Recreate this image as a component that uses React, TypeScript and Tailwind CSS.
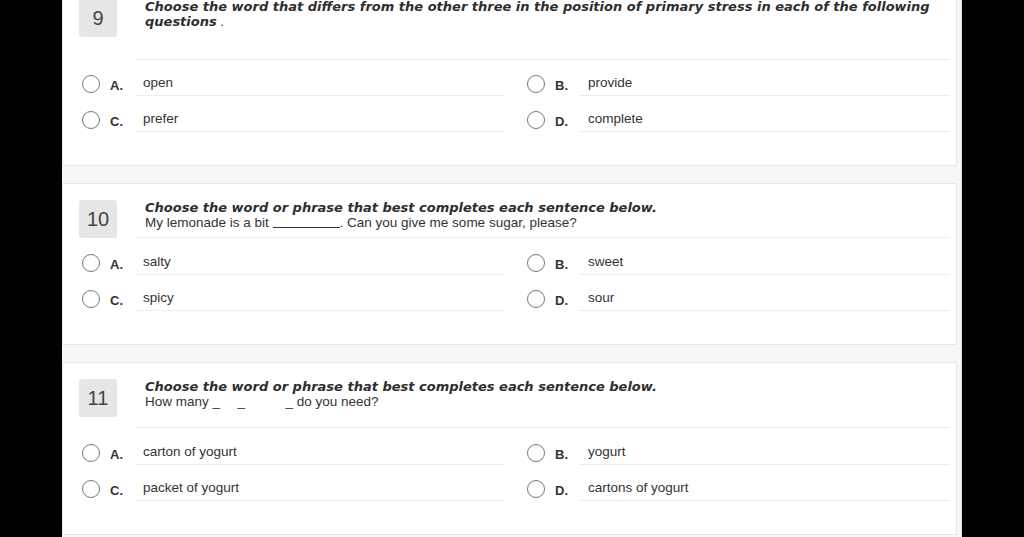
import React from 'react';

type Option = { key: string; text: string };

interface QuestionCardProps {
  num: number;
  title: React.ReactNode;
  body?: React.ReactNode;
  options: Option[];
  headerClass: string;
  optionsClass: string;
  className?: string;
}

const sans = { fontFamily: '"Liberation Sans", Arial, sans-serif' };
const heavy = { fontFamily: '"DejaVu Sans", Verdana, sans-serif' };

const Radio = () => (
  <span className="ml-[2px] block w-[18px] h-[18px] shrink-0 rounded-full border-[1.5px] border-[#777] bg-white" />
);

const OptionItem = ({ option }: { option: Option }) => (
  <div className="flex items-center h-[36px]">
    <Radio />
    <span className="ml-[10px] w-[25px] pt-[3px] text-[13px] font-bold text-[#333]">{option.key}.</span>
    <div className="flex-1 h-[24px] flex items-center pl-[8px] border-b border-[#ececec] text-[13.5px] text-[#333]">
      {option.text}
    </div>
  </div>
);

const QuestionCard = ({ num, title, body, options, headerClass, optionsClass, className }: QuestionCardProps) => (
  <div className={`shrink-0 bg-white border border-[#e6e6e6] pl-[16px] pr-[6px] pt-[16px] pb-[27px] ${className ?? ''}`}>
    <div className={`flex ${headerClass}`}>
      <div className="w-[38px] h-[38px] shrink-0 rounded-[3px] bg-[#e6e6e6] flex items-center justify-center text-[20px] text-[#444]">
        {num}
      </div>
      <div className="ml-[28px] flex-1">
        <div className="text-[13px] leading-[15px] font-bold italic text-[#2e2e2e]" style={heavy}>
          {title}
        </div>
        {body && <div className="text-[13.5px] leading-[15px] text-[#333]">{body}</div>}
      </div>
    </div>
    <div className="ml-[56px] h-px bg-[#ececec]" />
    <div className={`pl-[1px] grid grid-cols-2 gap-x-[20px] ${optionsClass}`}>
      {options.map((o) => (
        <OptionItem key={o.key} option={o} />
      ))}
    </div>
  </div>
);

export default function App() {
  return (
    <div className="w-full h-[537px] bg-black overflow-hidden" style={sans}>
      <div className="ml-[62px] w-[900px] h-full flex flex-col bg-[#f7f7f7] pr-[4px] border-r border-[#dcdcdc]">
        <QuestionCard
          className="-mt-[18px]"
          num={9}
          headerClass="h-[60px]"
          optionsClass="mt-[6px]"
          title={
            <>
              Choose the word that differs from the other three in the position of primary stress in each of the following
              questions<span className="font-normal not-italic" style={sans}> .</span>
            </>
          }
          options={[
            { key: 'A', text: 'open' },
            { key: 'B', text: 'provide' },
            { key: 'C', text: 'prefer' },
            { key: 'D', text: 'complete' },
          ]}
        />
        <QuestionCard
          className="mt-[17px]"
          num={10}
          headerClass="h-[37px]"
          optionsClass="mt-[7px]"
          title="Choose the word or phrase that best completes each sentence below."
          body={
            <>
              My lemonade is a bit <span className="inline-block w-[67px] border-b border-[#333] translate-y-[1px]" />. Can you give me some sugar, please?
            </>
          }
          options={[
            { key: 'A', text: 'salty' },
            { key: 'B', text: 'sweet' },
            { key: 'C', text: 'spicy' },
            { key: 'D', text: 'sour' },
          ]}
        />
        <QuestionCard
          className="mt-[17px]"
          num={11}
          headerClass="h-[48px]"
          optionsClass="mt-[7px]"
          title="Choose the word or phrase that best completes each sentence below."
          body={
            <>
              How many <span className="inline-block w-[4px]">_</span>
              <span className="inline-block w-[21px]" />
              <span className="inline-block w-[8px]">_</span>
              <span className="inline-block w-[40px]" />
              <span>_</span> do you need?
            </>
          }
          options={[
            { key: 'A', text: 'carton of yogurt' },
            { key: 'B', text: 'yogurt' },
            { key: 'C', text: 'packet of yogurt' },
            { key: 'D', text: 'cartons of yogurt' },
          ]}
        />
      </div>
    </div>
  );
}
